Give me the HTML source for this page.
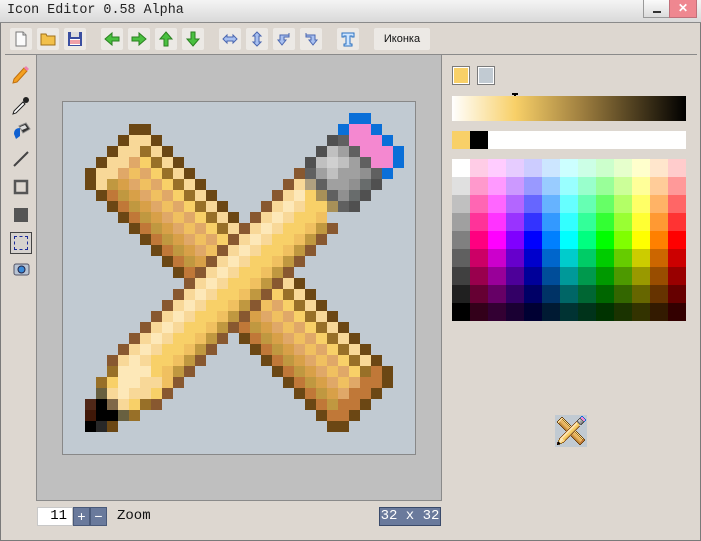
<!DOCTYPE html>
<html><head><meta charset="utf-8"><style>
*{margin:0;padding:0;box-sizing:border-box}
body{width:701px;height:541px;overflow:hidden;background:#ddd7d0;font-family:"Liberation Sans",sans-serif;position:relative}
.abs{position:absolute}
#title{left:0;top:0;width:701px;height:23px;background:linear-gradient(#f4f4f4,#d9d9d9);border-bottom:1px solid #8a8a8a}
#title span{position:absolute;left:7px;top:3px;font:13.4px "Liberation Mono",monospace;color:#222}
.tb{position:absolute;top:28px;width:22px;height:22px;background:#ece9e5;border-radius:2px}
.tb svg{position:absolute;left:3px;top:3px}
</style></head><body>
<div class="abs" style="left:0;top:0;width:701px;height:541px;border:1px solid #7a7a7a;border-top:none"></div>
<div id="title" class="abs"><span>Icon Editor 0.58 Alpha</span>
<div class="abs" style="left:643px;top:0;width:27px;height:18px;background:linear-gradient(#fafafa,#dcdcdc);border:1px solid #999;border-top:none"><div class="abs" style="left:9px;top:11px;width:8px;height:2px;background:#333"></div></div>
<div class="abs" style="left:669px;top:0;width:28px;height:18px;background:#ef8790;border:1px solid #c0707a;border-top:none;color:#fff;font-size:12px;font-weight:bold;text-align:center;line-height:16px">✕</div>
</div>

<!-- toolbar -->
<div class="tb" style="left:10px"><svg width="16" height="16"><path d="M3 1h7l3 3v11H3z" fill="#fbfbfb" stroke="#777"/><path d="M10 1v3h3" fill="#ddd" stroke="#777"/></svg></div>
<div class="tb" style="left:37px"><svg width="16" height="16"><path d="M1 3h5l1 2h8v9H1z" fill="#f2c04a" stroke="#a07018"/></svg></div>
<div class="tb" style="left:64px"><svg width="16" height="16"><rect x="1" y="1" width="14" height="14" fill="#3a4ea0"/><rect x="4" y="1" width="8" height="5" fill="#ddd"/><rect x="3" y="8" width="10" height="6" fill="#fff"/><path d="M3 10h10M3 12h10" stroke="#e04050"/></svg></div>
<div class="tb" style="left:101px"><svg width="16" height="16"><path d="M1 8l7-6v4h7v4H8v4z" fill="#4ac040" stroke="#2a8020"/></svg></div>
<div class="tb" style="left:128px"><svg width="16" height="16"><path d="M15 8l-7-6v4H1v4h7v4z" fill="#4ac040" stroke="#2a8020"/></svg></div>
<div class="tb" style="left:155px"><svg width="16" height="16"><path d="M8 1l6 7h-4v7H6V8H2z" fill="#4ac040" stroke="#2a8020"/></svg></div>
<div class="tb" style="left:182px"><svg width="16" height="16"><path d="M8 15l6-7h-4V1H6v7H2z" fill="#4ac040" stroke="#2a8020"/></svg></div>
<div class="tb" style="left:219px"><svg width="16" height="16"><path d="M1 8l4-4v2h6V4l4 4-4 4v-2H5v2z" fill="#a8c0f0" stroke="#4a66b0"/></svg></div>
<div class="tb" style="left:246px"><svg width="16" height="16"><path d="M8 1l4 4h-2v6h2l-4 4-4-4h2V5H4z" fill="#a8c0f0" stroke="#4a66b0"/></svg></div>
<div class="tb" style="left:273px"><svg width="16" height="16"><path d="M13 2v4H8v3h2l-4 5-4-5h2V4h9z" fill="#a8c0f0" stroke="#4a66b0"/></svg></div>
<div class="tb" style="left:300px"><svg width="16" height="16"><path d="M3 2v4h5v3H6l4 5 4-5h-2V4H3z" fill="#a8c0f0" stroke="#4a66b0"/></svg></div>
<div class="tb" style="left:337px"><svg width="16" height="16"><path d="M2 2h12v4h-2V5H10v8h2v2H4v-2h2V5H4v1H2z" fill="#cfe6ff" stroke="#2a70c0"/></svg></div>
<div class="tb" style="left:374px;width:56px;font-size:11px;text-align:center;line-height:22px;color:#111">Иконка</div>
<div class="abs" style="left:5px;top:54px;width:692px;height:1px;background:#8a8a8a"></div>

<!-- left tools -->
<div class="abs" style="left:36px;top:55px;width:1px;height:445px;background:#8a8a8a"></div>
<svg class="abs" style="left:10px;top:62px" width="22" height="220">
<path d="M4 17l10-11 3 3-10 11-4 1z" fill="#f4a020" stroke="#c07010"/><path d="M14 6l2-2 3 3-2 2z" fill="#f080b0"/>
<path d="M4 49l9-9 2 2-9 9-3 1z" fill="#fff" stroke="#222"/><circle cx="16" cy="38" r="3" fill="#222"/>
<path d="M4 72q0-6 6-6v8l-4 3z" fill="#1060d0"/><path d="M9 64l7-3 4 6-7 4z" fill="#333" stroke="#888"/><path d="M10 65l5-2 2 3-5 2z" fill="#ddd"/>
<path d="M4 104l14-14" stroke="#444" stroke-width="2"/>
<rect x="5" y="119" width="12" height="12" fill="none" stroke="#555" stroke-width="2.5"/>
<rect x="4" y="146" width="14" height="14" fill="#555"/>
<rect x="4" y="202" width="15" height="11" rx="2" fill="#b8c4d4" stroke="#556"/><circle cx="11.5" cy="207.5" r="3.5" fill="#3a8ad8" stroke="#224"/>
</svg>
<div class="abs" style="left:10px;top:232px;width:22px;height:22px;border:1px solid #444;background:#d6d2ce"><div class="abs" style="left:3px;top:3px;width:14px;height:14px;border:1px dashed #1a2a9a"></div></div>

<!-- canvas area -->
<div class="abs" style="left:36px;top:55px;width:406px;height:446px;background:#bfbfbf;border:1px solid #8a8a8a;border-top:none"></div>
<div class="abs" style="left:62px;top:101px;width:354px;height:354px;background:#c1cad2;border:1px solid #888"></div>
<svg id="big" class="abs" style="left:63px;top:102px" width="352" height="352" viewBox="0 0 32 32" shape-rendering="crispEdges"></svg>

<!-- bottom -->
<div class="abs" style="left:37px;top:507px;width:36px;height:19px;background:#fff;border:1px solid #c8c8c8;font:14px 'Liberation Mono',monospace;text-align:right;padding-right:5px;line-height:17px">11</div>
<div class="abs" style="left:73px;top:507px;width:17px;height:19px;background:#6a7a9c;border:1px solid #4a5a7a;color:#fff;text-align:center;font-size:14px;line-height:16px">+</div>
<div class="abs" style="left:90px;top:507px;width:17px;height:19px;background:#6a7a9c;border:1px solid #4a5a7a;color:#fff;text-align:center;font-size:14px;line-height:16px">−</div>
<div class="abs" style="left:117px;top:508px;font:14px 'Liberation Mono',monospace;color:#111">Zoom</div>
<div class="abs" style="left:379px;top:507px;width:62px;height:19px;background:#6a7a9c;border:1px solid #3a4a6a;color:#fff;font:14px 'Liberation Mono',monospace;text-align:center;line-height:17px">32 x 32</div>

<!-- right panel -->
<div class="abs" style="left:452px;top:66px;width:18px;height:19px;background:#f8d068;border:1px solid #7a7a7a;outline:1px solid #fff;outline-offset:-2px"></div>
<div class="abs" style="left:477px;top:66px;width:18px;height:19px;background:#c1cad2;border:1px solid #7a7a7a;outline:1px solid #fff;outline-offset:-2px"></div>
<div class="abs" style="left:512px;top:93px;width:6px;height:2px;background:#000"></div><div class="abs" style="left:514px;top:95px;width:2px;height:2px;background:#000"></div>
<div class="abs" style="left:452px;top:96px;width:234px;height:25px;background:linear-gradient(90deg,#fff 0%,#f8d068 27%,#a08040 55%,#000 100%)"></div>
<div class="abs" style="left:452px;top:131px;width:234px;height:18px;background:#fff"></div>
<div class="abs" style="left:452px;top:131px;width:18px;height:18px;background:#f8d068"></div>
<div class="abs" style="left:470px;top:131px;width:18px;height:18px;background:#000"></div>
<div id="pal" class="abs" style="left:452px;top:159px;width:234px;height:162px"></div>
<div class="abs" style="left:555px;top:415px;width:32px;height:32px;background:#c1cad2"></div>
<svg id="small" class="abs" style="left:555px;top:415px" width="32" height="32" viewBox="0 0 32 32" shape-rendering="crispEdges"></svg>

<script>
// palette
(function(){
var hs=[[1,0,.5],[1,0,1],[.5,0,1],[0,0,1],[0,.5,1],[0,1,1],[0,1,.5],[0,1,0],[.5,1,0],[1,1,0],[1,.5,0],[1,0,0]];
var grays=[255,224,192,160,128,96,64,32,0];
var h='';
for(var r=0;r<9;r++){
 h+='<div class="abs" style="left:0;top:'+(r*18)+'px;width:18px;height:18px;background:rgb('+grays[r]+','+grays[r]+','+grays[r]+')"></div>';
 for(var c=0;c<12;c++){
  var col=hs[c].map(function(v){
   if(r<4){var t=[.8,.6,.4,.2][r];return Math.round(v*255*(1-t)+255*t);}
   if(r==4)return Math.round(v*255);
   var f=[.8,.6,.4,.2][r-5];return Math.round(v*255*f);});
  h+='<div class="abs" style="left:'+((c+1)*18)+'px;top:'+(r*18)+'px;width:18px;height:18px;background:rgb('+col+')"></div>';
 }}
document.getElementById('pal').innerHTML=h;
})();
// pixel art
(function(){
var g={};
function set(c,r,col){g[r+','+c]=col;}
var dcol={'-5':'#6b4714','-4':'#c07838','-3':'#c09840','-2':'#d8a048','-1':'#e0a868','0':'#f0c060','1':'#e0a868','2':'#f8d068','3':'#987028','4':'#f8d898','5':'#6b4714'};
for(var r=0;r<32;r++)for(var c=0;c<32;c++){
 var d=c-r,s=c+r;
 if(Math.abs(d)<=5&&s>=8&&s<=54){
  var col=dcol[d];
  if(s==8||s==54||(Math.abs(d)==5))col='#6b4714';
  if((s==9||s==10)&&col!='#6b4714')col='#f8d898';
  if(s>=52&&col!='#6b4714')col='#c07838';
  set(c,r,col);
 }}
var scol={27:'#885830',28:'#f8d898',29:'#fde8b8',30:'#f8d898',31:'#f8d068',32:'#f8d068',33:'#f0c060',34:'#c09840',35:'#885830'};
for(var r=0;r<32;r++)for(var c=0;c<32;c++){
 var d=c-r,s=c+r;
 if(s>=27&&s<=35&&d>=-19&&d<=13)set(c,r,scol[s]);
}
var B='#0a6fd8',P='#f488d0',K='#505050',G='#606060',L='#c0c0c0',W='#d0d0d0',M='#a0a0a0',N='#909090',H='#686c6c',O='#a89058',T='#b0a080',Y='#f8d068',C='#fde8b8',Lt='#f8d898';
var ov=[
[1,26,[B,B]],[2,25,[B,P,P,B]],[3,24,[K,G,P,P,P,B]],[4,23,[K,L,M,G,P,P,P,B]],[5,22,[K,L,W,L,M,G,P,P,B]],
[6,21,['#885830',G,M,L,M,M,N,G,B]],[7,21,[Lt,T,G,M,M,N,H,K]],[8,21,[C,Y,O,G,N,H,K]],[9,21,[Lt,Y,Y,O,G,K]],
[24,4,['#987028',C,C,C,Y,'#f0c060','#c09840','#885830']],
[25,3,['#987028',Y,C,C,Lt,Lt,'#f0c060','#885830']],
[26,3,['#686040',Lt,C,Lt,Lt,Y,'#885830']],
[27,2,['#502818','#000','#806848',Lt,Y,'#987028','#885830']],
[28,2,['#401808','#000','#000','#686040','#987028']],
[29,2,['#000','#282828','#6b4714']]];
ov.forEach(function(o){o[2].forEach(function(col,i){set(o[1]+i,o[0],col);});});
// clear stray cells right of eraser
[[7,29],[8,28],[9,27],[8,29],[9,28]].forEach(function(p){delete g[p[0]+','+p[1]];});
var h='';
for(var k in g){var p=k.split(',');h+='<rect x="'+p[1]+'" y="'+p[0]+'" width="1" height="1" fill="'+g[k]+'"/>';}
document.getElementById('big').innerHTML=h;
document.getElementById('small').innerHTML=h;
})();
</script>
</body></html>
